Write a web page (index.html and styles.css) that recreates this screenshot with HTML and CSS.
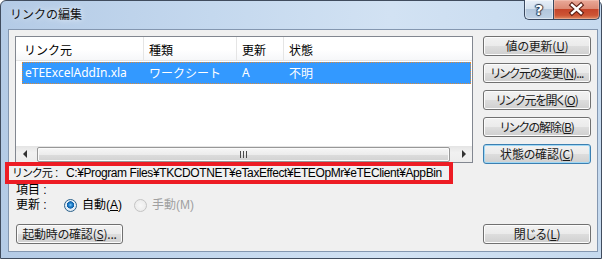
FILE: index.html
```html
<!DOCTYPE html>
<html lang="ja">
<head>
<meta charset="utf-8">
<title>リンクの編集</title>
<link rel="stylesheet" href="styles.css">
</head>
<body>
<div class="window">
  <div class="titlebar">
    <span class="title">リンクの編集</span>
    <div class="caption">
      <div class="cap help">?</div>
      <div class="cap close">
        <svg width="45" height="19" viewBox="0 0 45 19">
          <path d="M18 5 L27 13 M27 5 L18 13" stroke="#5b1d12" stroke-width="4.6" stroke-linecap="square" fill="none"/>
          <path d="M18 5 L27 13 M27 5 L18 13" stroke="#ffffff" stroke-width="2.4" stroke-linecap="square" fill="none"/>
        </svg>
      </div>
    </div>
  </div>
  <div class="client">
    <div class="top">
      <div class="listbox">
        <div class="lv-head">
          <div class="hcol h1">リンク元</div>
          <div class="hcol h2">種類</div>
          <div class="hcol h3">更新</div>
          <div class="hcol h4">状態</div>
        </div>
        <div class="lv-row">
          <div class="cell r1">eTEExcelAddIn.xla</div>
          <div class="cell r2">ワークシート</div>
          <div class="cell r3">A</div>
          <div class="cell r4">不明</div>
        </div>
        <div class="lv-fill"></div>
        <div class="hscroll">
          <div class="arrow"><span class="tri-left"></span></div>
          <div class="thumb"><span class="grip"></span></div>
          <div class="arrow"><span class="tri-right"></span></div>
        </div>
      </div>
      <div class="side">
        <div class="btn">値の更新(<u>U</u>)</div>
        <div class="btn kana">リンク元の変更(<u>N</u>)...</div>
        <div class="btn kana">リンク元を開く(<u>O</u>)</div>
        <div class="btn kana">リンクの解除(<u>B</u>)</div>
        <div class="btn default">状態の確認(<u>C</u>)</div>
      </div>
    </div>
    <div class="src">
      <span class="src-label"><span class="kn">リンク元</span> :</span>
      <span class="src-path">C:¥Program Files¥TKCDOTNET¥eTaxEffect¥ETEOpMr¥eTEClient¥AppBin</span>
    </div>
    <div class="info item">項目 :</div>
    <div class="info update">
      <span class="upd-label">更新 :</span>
      <span class="opt opt-auto"><span class="radio checked"></span><span>自動(<u>A</u>)</span></span>
      <span class="opt disabled"><span class="radio off"></span><span>手動(M)</span></span>
    </div>
    <div class="bottom">
      <div class="btn startup">起動時の確認(<u>S</u>)...</div>
      <div class="btn closebtn">閉じる(<u>L</u>)</div>
    </div>
  </div>
</div>
</body>
</html>
```

FILE: styles.css
```css
*, *::before, *::after { box-sizing: border-box; }
html, body { margin: 0; padding: 0; background: #ffffff; }
body {
  width: 606px;
  height: 259px;
  overflow: hidden;
  font: 12px/16px "Liberation Sans", "Noto Sans CJK JP", sans-serif;
  color: #000;
}
u { text-decoration: underline; text-underline-offset: 1px; }

.window {
  width: 602px;
  height: 259px;
  border: 1px solid #404c5e;
  border-radius: 6px 6px 0 0;
  background: linear-gradient(90deg, #b4cbe6 0%, #c4d8ee 35%, #d2e2f3 65%, #c6daef 100%);
  padding: 0 3px 6px 7px;
  display: flex;
  flex-direction: column;
}

.titlebar {
  height: 28px;
  display: flex;
  align-items: flex-start;
}
.title {
  padding: 5px 0 0 2px;
  font-family: "Noto Sans CJK JP", sans-serif;
  font-size: 12px;
  line-height: 16px;
  color: #111;
  text-shadow: 0 0 6px rgba(255,255,255,0.9);
}
.caption {
  margin-left: auto;
  margin-right: -2px;
  margin-top: -1px;
  display: flex;
}
.cap {
  height: 20px;
  border: 1px solid #3a4960;
  border-top: none;
  display: flex;
  align-items: center;
  justify-content: center;
}
.help {
  width: 29px;
  border-right: none;
  border-radius: 0 0 0 5px;
  background: linear-gradient(#e6eef8 0%, #d3e0ee 45%, #b2c6dc 50%, #bfd2e6 100%);
  box-shadow: inset 0 0 0 1px rgba(255,255,255,0.45);
  color: #fff;
  font: bold 14px/18px "DejaVu Sans", sans-serif;
  text-shadow: 0 0 1px #2b3a50, 1px 0 1px #2b3a50, -1px 0 1px #2b3a50, 0 1px 1px #2b3a50, 0 -1px 1px #2b3a50;
}
.close {
  width: 47px;
  border-radius: 0 0 5px 0;
  background: linear-gradient(#e9a999 0%, #dc8a75 45%, #c5452a 50%, #cd5434 80%, #de8a62 100%);
  box-shadow: inset 0 0 0 1px rgba(255,220,210,0.35);
}

.client {
  height: 223px;
  border: 1px solid #8497b0;
  background: #f0f0f0;
  display: flex;
  flex-direction: column;
}

.top {
  display: flex;
  align-items: flex-start;
  height: 133px;
  padding: 6px 0 0 6px;
}
.listbox {
  width: 458px;
  height: 127px;
  border: 1px solid #828790;
  background: #fff;
  display: flex;
  flex-direction: column;
}
.lv-head {
  height: 24px;
  display: flex;
  border-bottom: 1px solid #e5e5e5;
  background: linear-gradient(#ffffff 0%, #ffffff 55%, #f6f7f9 100%);
  font-family: "Noto Sans CJK JP", sans-serif;
}
.hcol {
  padding: 3px 0 0 5px;
  line-height: 20px;
  border-right: 1px solid #e5e5e5;
  white-space: nowrap;
}
.h1 { width: 128px; padding-left: 8px; }
.h2 { width: 93px; }
.h3 { width: 47px; }
.h4 { flex: 1; border-right: none; }

.lv-row {
  margin: 1px 1px 0 6px;
  height: 22px;
  display: flex;
  background: #3399ff;
  color: #fff;
  outline: 1px dotted #d9893a;
  outline-offset: -1px;
  line-height: 22px;
  font-family: "Noto Sans CJK JP", sans-serif;
}
.cell { white-space: nowrap; padding-left: 5px; }
.r1 { width: 122px; padding-left: 3px; font-family: "Noto Sans", sans-serif; }
.r2 { width: 93px; }
.r3 { width: 47px; font-family: "Noto Sans", sans-serif; }
.r4 { flex: 1; }
.lv-fill { flex: 1; }

.hscroll {
  height: 16px;
  display: flex;
  background: linear-gradient(#e4e4e4, #f1f1f1 40%, #ededed);
}
.arrow {
  width: 17px;
  display: flex;
  align-items: center;
  justify-content: center;
}
.tri-left {
  width: 0; height: 0;
  border-top: 4px solid transparent;
  border-bottom: 4px solid transparent;
  border-right: 4px solid #333;
}
.tri-right {
  width: 0; height: 0;
  border-top: 4px solid transparent;
  border-bottom: 4px solid transparent;
  border-left: 4px solid #333;
}
.thumb {
  flex: 1;
  margin: 1px 5px 0 4px;
  border: 1px solid #979797;
  border-radius: 2px;
  background: linear-gradient(#f6f6f6 0%, #ececec 50%, #dcdcdc 51%, #d2d2d2 100%);
  box-shadow: inset 0 0 0 1px #fbfbfb;
  display: flex;
  align-items: center;
  justify-content: center;
}
.grip {
  width: 7px;
  height: 7px;
  background: repeating-linear-gradient(90deg, #4a4a4a 0 1px, transparent 1px 3px);
}

.side {
  margin-left: 10px;
  width: 108px;
  display: flex;
  flex-direction: column;
  gap: 7px;
}
.btn {
  height: 20px;
  border: 1px solid #707070;
  border-radius: 3px;
  background: linear-gradient(#f2f2f2 0%, #ebebeb 48%, #dddddd 52%, #cfcfcf 100%);
  box-shadow: inset 0 0 0 1px #fcfcfc;
  display: flex;
  align-items: center;
  justify-content: center;
  line-height: 18px;
  white-space: nowrap;
  font-family: "Noto Sans CJK JP", sans-serif;
  font-feature-settings: "palt" 1;
  letter-spacing: -0.2px;
  color: #1a1a1a;
}
.btn.kana { letter-spacing: -1px; }
.btn.default {
  border-color: #3c7fb1;
  box-shadow: inset 0 0 0 1px #9fd8f5;
}

.src {
  position: relative;
  margin-top: 2px;
  height: 16px;
  padding-left: 3px;
  display: flex;
  white-space: nowrap;
}
.src-label { width: 54px; }
.kn { font-size: 11px; letter-spacing: -1.1px; }
.src-path { letter-spacing: -0.4px; }
.src::after {
  content: "";
  position: absolute;
  left: -4px;
  top: -3px;
  width: 448px;
  height: 22px;
  border: 4px solid #ed1c24;
}

.info {
  height: 16px;
  padding-left: 7px;
}
.info.item {
  margin-top: 2px;
  height: 14px;
  line-height: 14px;
}
.update {
  display: flex;
  align-items: center;
}
.upd-label { width: 48px; }
.opt {
  display: flex;
  align-items: center;
  gap: 5px;
}
.opt-auto { width: 70px; }
.opt.disabled { color: #a0a0a0; }
.radio {
  width: 13px;
  height: 13px;
  border-radius: 50%;
  flex: none;
}
.radio.checked {
  border: 1px solid #2c628b;
  background: radial-gradient(circle at 50% 45%, #8fd3fb 0, #2a8ad4 1.5px, #0d5fa8 3.4px, #e9f1f8 3.9px, #dfe9f2 5.5px);
}
.radio.off {
  border: 1px solid #c4c4c4;
  background: radial-gradient(circle, #f7f7f7 0, #ececec 5.5px);
}

.bottom {
  display: flex;
  justify-content: space-between;
  margin-top: 11px;
  padding: 0 6px 0 7px;
}
.startup { width: 107px; }
.closebtn { width: 108px; }
```
